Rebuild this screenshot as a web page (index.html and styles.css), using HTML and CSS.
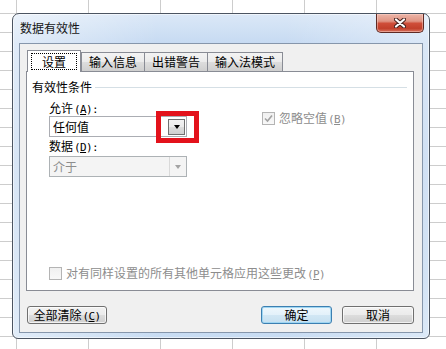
FILE: index.html
```html
<!doctype html>
<html>
    <head>
        <title>数据有效性</title>
        <meta charset="utf-8">
        <link rel="stylesheet" href="styles.css">
    </head>
    <body>
        <div class="dialog">
            <div class="caption">
                <span class="caption-title">数据有效性</span>
                <div class="close-btn">
                    <svg width="12" height="10" viewBox="0 0 12 10">
                        <path d="M2 1.5 L10 8.5 M10 1.5 L2 8.5" stroke="#4a2420" stroke-width="4.2" stroke-linecap="round"/>
                        <path d="M2 1.5 L10 8.5 M10 1.5 L2 8.5" stroke="#ffffff" stroke-width="2.2" stroke-linecap="round"/>
                    </svg>
                </div>
            </div>
            <div class="client">
                <div class="tabs">
                    <div class="tab tab-active"><span class="focus">设置</span></div>
                    <div class="tab">输入信息</div>
                    <div class="tab">出错警告</div>
                    <div class="tab">输入法模式</div>
                </div>
                <div class="panel">
                    <div class="group-title"><span>有效性条件</span></div>
                    <div class="criteria">
                        <div class="fields">
                            <div class="label label-allow">允许<span class="hk">(<u>A</u>):</span></div>
                            <div class="combo">
                                <span class="combo-text">任何值</span>
                                <span class="drop"><i class="arrow"></i></span>
                                <div class="highlight"></div>
                            </div>
                            <div class="label label-data">数据<span class="hk">(<u>D</u>):</span></div>
                            <div class="combo combo-disabled">
                                <span class="combo-text">介于</span>
                                <span class="drop"><i class="arrow"></i></span>
                            </div>
                        </div>
                        <div class="check check-blank">
                            <span class="box">
                                <svg width="9" height="9" viewBox="0 0 9 9">
                                    <path d="M1 4.5 L3.5 7 L8 1.5" fill="none" stroke="#a2a2a2" stroke-width="1.6"/>
                                </svg>
                            </span>
                            <span>忽略空值<span class="hk">(<u>B</u>)</span></span>
                        </div>
                    </div>
                    <div class="check check-apply">
                        <span class="box"></span>
                        <span>对有同样设置的所有其他单元格应用这些更改<span class="hk">(<u>P</u>)</span></span>
                    </div>
                </div>
                <div class="buttons">
                    <div class="btn btn-clear">全部清除<span class="hk">(<u>C</u>)</span></div>
                    <div class="btn btn-default">确定</div>
                    <div class="btn btn-cancel">取消</div>
                </div>
            </div>
        </div>
    </body>
</html>
```

FILE: styles.css
```css
body {
    margin: 0;
    padding: 13px 0 0 12px;
    height: 349px;
    box-sizing: border-box;
    overflow: hidden;
    background-color: #ffffff;
    background-image:
        linear-gradient(to right, #cdcdcd 1px, transparent 1px),
        linear-gradient(to bottom, #cdcdcd 1px, transparent 1px);
    background-size: 72px 19px;
    background-position: 16px 13px;
    font: 12px/14px 'Noto Sans CJK SC', 'Liberation Sans', sans-serif;
    color: #000;
}

u {
    text-decoration: underline;
    text-underline-offset: 1px;
}

/* half-width hotkey part, 6px per char like the dialog font */
.hk {
    font-family: 'DejaVu Sans Mono', monospace;
    font-size: 11px;
    line-height: 1;
    letter-spacing: -0.6px;
    padding-left: 1px;
}

.dialog {
    width: 418px;
    height: 326px;
    box-sizing: border-box;
    border: 1px solid #4b5461;
    border-radius: 7px 7px 6px 6px;
    padding: 0 6px 6px 6px;
    background:
        linear-gradient(to right, rgba(255,255,255,.45), rgba(255,255,255,0) 35%, rgba(255,255,255,0) 65%, rgba(255,255,255,.35)),
        linear-gradient(to bottom, #dbe8f7 0, #c6daf2 30px, #b9d1ee 45%, #bcd4ef 80%, #c9ddf3 100%);
    box-shadow: inset 0 0 0 1px rgba(255,255,255,.55);
}

/* title bar */

.caption {
    height: 29px;
    display: flex;
    align-items: flex-start;
}

.caption-title {
    margin: 7px 0 0 1px;
    line-height: 14px;
    color: #151515;
}

.close-btn {
    margin-left: auto;
    margin-right: -1px;
    width: 48px;
    height: 19px;
    box-sizing: border-box;
    border: 1px solid #5e2a24;
    border-top: none;
    border-radius: 0 0 5px 5px;
    background: linear-gradient(to bottom, #ecb5a8 0%, #e09483 40%, #cf4e39 52%, #c2402b 80%, #d8735f 100%);
    box-shadow: inset 0 0 0 1px rgba(255,220,210,.45);
    display: flex;
    align-items: center;
    justify-content: center;
}

/* client area */

.client {
    height: 290px;
    box-sizing: border-box;
    border: 1px solid #8696ab;
    background: #f0f0f0;
    display: flex;
    flex-direction: column;
}

.tabs {
    display: flex;
    align-items: flex-end;
    margin: 6px 0 0 8px;
    height: 21px;
    position: relative;
    z-index: 1;
}

.tab {
    height: 19px;
    box-sizing: border-box;
    padding: 0 7px;
    border: 1px solid #898c95;
    border-bottom: none;
    background: linear-gradient(to bottom, #f3f3f3 0%, #ebebeb 50%, #dddddd 50%, #cfcfcf 100%);
    line-height: 17px;
    white-space: nowrap;
}

.tab + .tab {
    margin-left: -1px;
}

.tab-active {
    height: 22px;
    width: 54px;
    padding: 0;
    margin-bottom: -1px;
    margin-left: -1px;
    background: #ffffff;
    display: flex;
    justify-content: center;
    align-items: flex-start;
    padding-top: 2px;
    margin-right: 0;
}

.tab-active + .tab {
    margin-left: 0;
}

.focus {
    border: 1px dotted #000;
    padding: 0 10px;
    line-height: 15px;
}

.panel {
    margin-left: 6px;
    width: 388px;
    height: 220px;
    box-sizing: border-box;
    border: 1px solid #898c95;
    background: #ffffff;
    display: flex;
    flex-direction: column;
    padding-bottom: 10px;
}

.group-title {
    display: flex;
    align-items: center;
    margin: 7px 6px 0 5px;
    height: 16px;
}

.group-title::after {
    content: '';
    flex: 1;
    height: 1px;
    margin-left: 3px;
    background: #d5dfe5;
}

.criteria {
    display: flex;
    margin-left: 22px;
}

.fields {
    width: 138px;
    display: flex;
    flex-direction: column;
}

.label {
    height: 14px;
}

.label-allow {
    margin-top: 6px;
}

.label-data {
    margin-top: 2px;
}

.combo {
    position: relative;
    margin-top: 1px;
    height: 21px;
    box-sizing: border-box;
    border: 1px solid #abadb3;
    background: #ffffff;
    display: flex;
    align-items: center;
    padding: 0 1px 0 3px;
}

.combo-text {
    flex: 1;
    line-height: 14px;
}

.drop {
    width: 17px;
    height: 16px;
    box-sizing: border-box;
    border: 1px solid #707070;
    background: linear-gradient(to bottom, #f2f2f2 0%, #ebebeb 50%, #dddddd 50%, #cfcfcf 100%);
    display: flex;
    align-items: center;
    justify-content: center;
}

.arrow {
    width: 0;
    height: 0;
    border-left: 3.5px solid transparent;
    border-right: 3.5px solid transparent;
    border-top: 4px solid #000;
}

.combo-disabled {
    margin-top: 3px;
    background: #f4f4f4;
    border-color: #adb2b5;
    color: #8d8d8d;
    padding-right: 0;
}

.combo-disabled .drop {
    height: 19px;
    border: none;
    border-left: 1px solid #d9d9d9;
    background: #f4f4f4;
}

.combo-disabled .arrow {
    border-top-color: #a3a3a3;
}

.highlight {
    position: absolute;
    left: 106px;
    top: -6px;
    width: 43px;
    height: 32px;
    box-sizing: border-box;
    border: 5px solid #e3121b;
}

.check {
    display: flex;
    align-items: center;
    color: #8d8d8d;
    height: 14px;
    line-height: 14px;
}

.box {
    width: 13px;
    height: 13px;
    box-sizing: border-box;
    border: 1px solid #b4b4b4;
    background: linear-gradient(to bottom, #f0f0f0, #f8f8f8);
    margin-right: 4px;
    display: flex;
    align-items: center;
    justify-content: center;
}

.check-blank {
    align-self: flex-start;
    margin: 16px 0 0 75px;
}

.check-apply {
    margin: auto 0 0 22px;
}

/* bottom buttons */

.buttons {
    display: flex;
    margin: 15px 8px 0 7px;
}

.btn {
    height: 18px;
    box-sizing: border-box;
    border: 1px solid #707070;
    border-radius: 3px;
    background: linear-gradient(to bottom, #f2f2f2 0%, #ebebeb 50%, #dddddd 50%, #cfcfcf 100%);
    box-shadow: inset 0 0 0 1px rgba(255,255,255,.7);
    text-align: center;
    line-height: 15px;
}

.btn-clear {
    width: 80px;
}

.btn-default {
    width: 71px;
    margin-left: auto;
    border-color: #3c7fb1;
    box-shadow: inset 0 0 0 1px #9fd6f2;
    background: linear-gradient(to bottom, #eef7fc 0%, #e3f1fa 50%, #d2e7f4 50%, #c6e0f1 100%);
}

.btn-cancel {
    width: 72px;
    margin-left: 10px;
}
```
